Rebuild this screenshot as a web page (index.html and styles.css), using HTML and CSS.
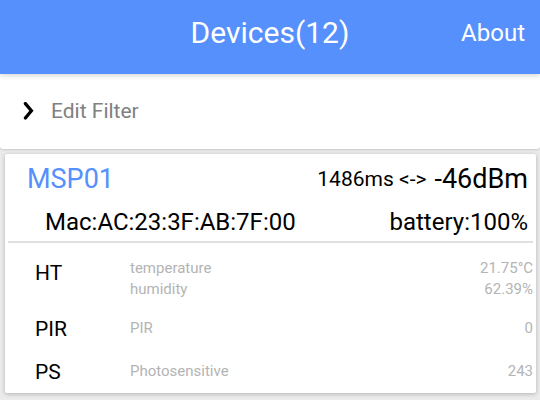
FILE: index.html
```html
<!DOCTYPE html>
<html lang="en">
<head>
<meta charset="utf-8">
<meta name="viewport" content="width=device-width, initial-scale=1">
<title>Devices</title>
<link rel="stylesheet" href="styles.css">
</head>
<body>
<header class="toolbar">
  <h1 class="toolbar-title">Devices(12)</h1>
  <a class="toolbar-link" href="#about">About</a>
</header>
<main>
  <button class="filter" type="button">
    <svg class="chevron" viewBox="0 0 12 20" width="12" height="20" aria-hidden="true"><path d="M2.4 1.6 8.4 8.8 2.4 16" fill="none" stroke="#000" stroke-width="3.3" stroke-linecap="round" stroke-linejoin="miter"/></svg>
    <span>Edit Filter</span>
  </button>
  <article class="card">
    <div class="summary">
      <div class="line">
        <h2 class="name">MSP01</h2>
        <p class="signal"><span class="interval">1486ms &lt;-&gt;</span> <span class="rssi">-46dBm</span></p>
      </div>
      <div class="line line-detail">
        <span class="mac">Mac:AC:23:3F:AB:7F:00</span>
        <span>battery:100%</span>
      </div>
    </div>
    <table class="sensors">
      <tbody>
        <tr><th scope="row">HT</th><td>temperature<br>humidity</td><td class="value">21.75°C<br>62.39%</td></tr>
        <tr><th scope="row">PIR</th><td>PIR</td><td class="value">0</td></tr>
        <tr><th scope="row">PS</th><td>Photosensitive</td><td class="value">243</td></tr>
      </tbody>
    </table>
  </article>
</main>
</body>
</html>
```
FILE: styles.css
```css
* {
  box-sizing: border-box;
}

body {
  margin: 0;
  background: #ebebeb;
  color: #000;
  font-family: Roboto, "Liberation Sans", sans-serif;
}

h1, h2, p {
  margin: 0;
  font-weight: 400;
}

.toolbar {
  position: relative;
  z-index: 1;
  display: grid;
  grid-template-columns: 1fr auto 1fr;
  align-items: center;
  padding: 13px 15px 21px;
  background: #5690fc;
  color: #fff;
  box-shadow: 0 1px 6px rgba(0, 0, 0, 0.2);
}

.toolbar-title {
  grid-column: 2;
  font-size: 30px;
  line-height: 40px;
}

.toolbar-link {
  justify-self: end;
  color: inherit;
  font-size: 24px;
  line-height: 36px;
  text-decoration: none;
}

.filter {
  display: flex;
  align-items: center;
  gap: 16px;
  width: 100%;
  padding: 22px 23px;
  border: 0;
  border-radius: 0 0 3px 3px;
  background: #fff;
  color: #808080;
  font: 21px/31px Roboto, "Liberation Sans", sans-serif;
  text-align: left;
  box-shadow: 0 1px 2px rgba(0, 0, 0, 0.15);
}

.card {
  margin: 5px 4px 7px 5px;
  padding: 7px 3px 1px;
  border-radius: 2px;
  background: #fff;
  box-shadow: 0 1px 4px rgba(0, 0, 0, 0.25);
}

.summary {
  padding: 0 5px 1px 19px;
  border-bottom: 2px solid #e0e0e0;
}

.line {
  display: flex;
  align-items: center;
  justify-content: space-between;
  line-height: 36px;
}

.line-detail {
  padding-top: 7px;
  font-size: 24px;
}

.name {
  color: #5690fc;
  font-size: 27px;
}

.signal {
  display: flex;
  align-items: center;
  gap: 8px;
}

.interval {
  font-size: 21px;
}

.rssi {
  font-size: 27px;
}

.mac {
  padding-left: 18px;
}

.sensors {
  width: 100%;
  margin-top: 7px;
  border-collapse: collapse;
  font-size: 15px;
  line-height: 21px;
}

.sensors th,
.sensors td {
  padding: 8px 0 6px;
  text-align: left;
  vertical-align: top;
}

.sensors th {
  width: 122px;
  padding: 11px 0 8px 27px;
  font-size: 21px;
  font-weight: 400;
  line-height: 24px;
}

.sensors td {
  color: #b4b4b4;
}

.sensors tr + tr td {
  vertical-align: middle;
}

.sensors .value {
  text-align: right;
}
```
